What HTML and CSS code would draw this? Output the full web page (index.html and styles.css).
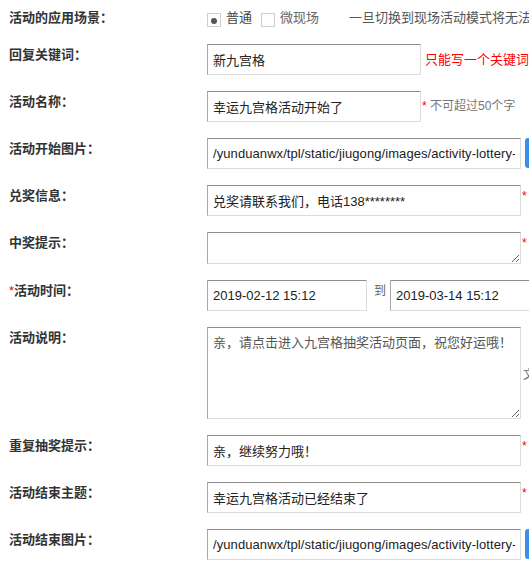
FILE: index.html
```html
<!DOCTYPE html>
<html lang="zh-CN">
<head>
<meta charset="utf-8">
<title>活动设置</title>
<link rel="stylesheet" href="styles.css">
</head>
<body>
<form class="form">
  <div class="row row-first">
    <label class="lbl">活动的应用场景：</label>
    <div class="ctl">
      <span class="box box-on"><span class="dot"></span></span>
      <span class="opt-text">普通</span>
      <span class="box box-check"></span>
      <span class="opt-text muted">微现场</span>
      <span class="note">一旦切换到现场活动模式将无法再切换回普通模式</span>
    </div>
  </div>

  <div class="row">
    <label class="lbl">回复关键词：</label>
    <div class="ctl">
      <input class="field w-s" type="text" value="新九宫格">
      <span class="hint-red">只能写一个关键词，不能重复</span>
    </div>
  </div>

  <div class="row">
    <label class="lbl">活动名称：</label>
    <div class="ctl">
      <input class="field w-s" type="text" value="幸运九宫格活动开始了">
      <span class="hint"><span class="star">*</span> 不可超过50个字</span>
    </div>
  </div>

  <div class="row">
    <label class="lbl">活动开始图片：</label>
    <div class="ctl">
      <input class="field w-l url" type="text" value="/yunduanwx/tpl/static/jiugong/images/activity-lottery-start.jpg">
      <span class="btn"></span>
    </div>
  </div>

  <div class="row">
    <label class="lbl">兑奖信息：</label>
    <div class="ctl">
      <input class="field w-l" type="text" value="兑奖请联系我们，电话138********">
      <span class="req">*</span>
    </div>
  </div>

  <div class="row">
    <label class="lbl">中奖提示：</label>
    <div class="ctl">
      <textarea class="ta ta-s"></textarea>
      <span class="req">*</span>
    </div>
  </div>

  <div class="row">
    <label class="lbl"><span class="star-l">*</span>活动时间：</label>
    <div class="ctl">
      <input class="field w-d" type="text" value="2019-02-12 15:12">
      <span class="to">到</span>
      <input class="field w-d" type="text" value="2019-03-14 15:12">
    </div>
  </div>

  <div class="row">
    <label class="lbl">活动说明：</label>
    <div class="ctl">
      <textarea class="ta ta-l">亲，请点击进入九宫格抽奖活动页面，祝您好运哦！</textarea>
      <span class="side">文字说明</span>
    </div>
  </div>

  <div class="row">
    <label class="lbl">重复抽奖提示：</label>
    <div class="ctl">
      <input class="field w-l" type="text" value="亲，继续努力哦！">
      <span class="req">*</span>
    </div>
  </div>

  <div class="row">
    <label class="lbl">活动结束主题：</label>
    <div class="ctl">
      <input class="field w-l" type="text" value="幸运九宫格活动已经结束了">
      <span class="req">*</span>
    </div>
  </div>

  <div class="row">
    <label class="lbl">活动结束图片：</label>
    <div class="ctl">
      <input class="field w-l url" type="text" value="/yunduanwx/tpl/static/jiugong/images/activity-lottery-end.jpg">
      <span class="btn"></span>
    </div>
  </div>
</form>
</body>
</html>
```

FILE: styles.css
```css
html, body {
  margin: 0;
  padding: 0;
  overflow: hidden;
  background: #fff;
}

body {
  font-family: "Liberation Sans", "Noto Sans CJK SC", sans-serif;
  font-size: 13px;
  color: #333;
}

.form {
  padding: 7px 0 0 9px;
}

.row {
  display: flex;
  align-items: flex-start;
  margin-bottom: 16px;
  white-space: nowrap;
}

.row-first {
  margin-bottom: 15px;
}

.lbl {
  flex: 0 0 198px;
  font-weight: bold;
  line-height: 22px;
  color: #333;
}

.star-l {
  color: #f00;
  font-weight: normal;
}

.ctl {
  display: flex;
  align-items: flex-start;
  flex-shrink: 0;
}

.row-first .ctl {
  line-height: 22px;
}

.box {
  box-sizing: border-box;
  width: 14px;
  height: 14px;
  margin-top: 6px;
  border: 1px solid #cfcfcf;
  background: #fff;
  display: flex;
  align-items: center;
  justify-content: center;
}

.dot {
  width: 6px;
  height: 6px;
  border-radius: 50%;
  background: #555;
  margin-top: 1px;
}

.box-check {
  margin-left: 9px;
}

.opt-text {
  margin-left: 5px;
  color: #444;
}

.opt-text.muted {
  color: #666;
}

.note {
  margin-left: 30px;
  color: #555;
}

.field {
  box-sizing: border-box;
  height: 31px;
  margin: 0;
  padding: 0 5px;
  border: 1px solid;
  border-color: #8e8e8e #dcdcdc #dcdcdc #a8a8a8;
  background: #fff;
  font-family: "Liberation Sans", "Noto Sans CJK SC", sans-serif;
  font-size: 13px;
  color: #222;
  outline: none;
}

.url {
  letter-spacing: 0.08px;
}

.w-s { width: 214px; }
.w-l { width: 314px; }
.w-d { width: 160px; }

.hint-red {
  margin-left: 4px;
  line-height: 31px;
  color: #f00;
}

.hint {
  margin-left: 1px;
  line-height: 31px;
  font-size: 12px;
  color: #777;
}

.star {
  color: #f00;
}

.req {
  margin-left: 1px;
  font-size: 12px;
  line-height: 22px;
  color: #f00;
}

.btn {
  width: 24px;
  height: 30px;
  margin-left: 4px;
  background: #3a8ee4;
  border-radius: 3px;
}

.to {
  margin: 0 4px 0 7px;
  font-size: 12px;
  line-height: 22px;
  color: #666;
}

.ta {
  box-sizing: border-box;
  width: 314px;
  margin: 0;
  padding: 5px 5px;
  border: 1px solid;
  border-color: #8e8e8e #dcdcdc #dcdcdc #a8a8a8;
  background: #fff;
  font-family: "Liberation Sans", "Noto Sans CJK SC", sans-serif;
  font-size: 13px;
  line-height: 20px;
  color: #555;
  outline: none;
  display: block;
}

.ta-s { height: 32px; }
.ta-l { height: 92px; }

.side {
  align-self: center;
  margin-left: 2px;
  font-size: 12px;
  color: #666;
}
```
